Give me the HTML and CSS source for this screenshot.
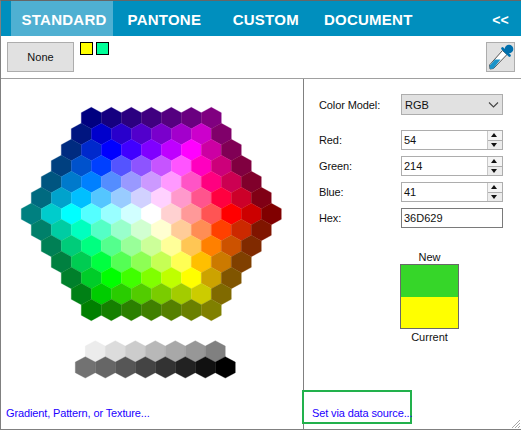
FILE: index.html
```
<!DOCTYPE html>
<html lang="en">
<head>
<meta charset="utf-8">
<title>Color picker</title>
<link rel="stylesheet" href="styles.css">
</head>
<body>
<div class="window">
  <nav class="tabs">
    <span class="tab active">STANDARD</span>
    <span class="tab pantone">PANTONE</span>
    <span class="tab custom">CUSTOM</span>
    <span class="tab document">DOCUMENT</span>
    <span class="collapse">&lt;&lt;</span>
  </nav>
  <div class="toolbar">
    <button class="btn none">None</button>
    <span class="swatch yellow"></span>
    <span class="swatch mint"></span>
    <button class="btn dropper">
      <svg width="27" height="28" viewBox="1 1 27 28">
        <path d="M4 27 L3.5 23 L16.5 8.5 L21 12.5 L7.5 26.5 Z" fill="#fff" stroke="#555" stroke-width="1"/>
        <path d="M4 27 L3.7 23.5 L9 17.5 L14.5 17.5 L7.5 26.5 Z" fill="#1a93c9"/>
        <circle cx="23" cy="7" r="4.3" fill="#0070ad"/>
        <path d="M16.5 6.5 L23.5 13.5" stroke="#0070ad" stroke-width="2.6" stroke-linecap="round"/>
      </svg>
    </button>
  </div>
  <div class="main">
    <section class="left">
      <svg id="comb" class="comb" width="302" height="311" viewBox="0 0 302 311"></svg>
      <a class="link grad">Gradient, Pattern, or Texture...</a>
    </section>
    <section class="right">
      <div class="row model">
        <label>Color Model:</label>
        <div class="select"><span>RGB</span>
          <svg width="11" height="6" viewBox="0 0 11 6"><path d="M1 .5 L5.5 5 L10 .5" fill="none" stroke="#444" stroke-width="1.1"/></svg>
        </div>
      </div>
      <div class="row"><label>Red:</label><div class="num"><span>54</span><div class="spin"><i class="up"></i><i class="down"></i></div></div></div>
      <div class="row"><label>Green:</label><div class="num"><span>214</span><div class="spin"><i class="up"></i><i class="down"></i></div></div></div>
      <div class="row"><label>Blue:</label><div class="num"><span>41</span><div class="spin"><i class="up"></i><i class="down"></i></div></div></div>
      <div class="row"><label>Hex:</label><div class="num hex"><span>36D629</span></div></div>
      <div class="preview">
        <span>New</span>
        <div class="boxes"><div class="new"></div><div class="current"></div></div>
        <span class="current-label">Current</span>
      </div>
      <div class="source"><a class="link">Set via data source...</a></div>
    </section>
  </div>
  <svg class="grip" width="10" height="10" viewBox="0 0 10 10"><path d="M9 1 L1 9 M9 4 L4 9 M9 7 L7 9" stroke="#a8a8a8" stroke-width="1"/></svg>
</div>
<script src="script.js"></script>
</body>
</html>
```
FILE: styles.css
```
* { box-sizing: border-box; }
html, body { margin: 0; padding: 0; background: #fff; }
body { font: 11px/14px "Liberation Sans", Arial, sans-serif; color: #111; }
.window { position: relative; width: 521px; height: 430px; display: flex; flex-direction: column; border-top: 1px solid #666; border-left: 1px solid #808080; border-bottom: 1px solid #808080; overflow: hidden; }
.tabs { height: 35px; flex: none; background: #008fbe; display: flex; align-items: stretch; color: #fff; font-weight: 700; font-size: 15px; letter-spacing: .25px; padding-left: 10px; }
.tab { display: flex; align-items: center; padding-top: 2px; }
.tab.active { background: #4fb0d2; width: 102px; padding-left: 10.5px; }
.pantone { margin-left: 14.5px; }
.custom { margin-left: 31.5px; }
.document { margin-left: 25px; }
.collapse { margin-left: auto; align-self: center; padding: 2px 12px 0 0; font-size: 14px; }
.toolbar { height: 43px; flex: none; display: flex; align-items: flex-start; gap: 3px; padding: 6px 6px 0; border-bottom: 1px solid #a0a0a0; }
.btn { background: #e1e1e1; border: 1px solid #adadad; height: 30px; padding: 0; font: inherit; color: #111; }
.none { width: 67px; margin-right: 3px; }
.swatch { width: 13px; height: 13px; border: 1px solid #000; }
.yellow { background: #ffff00; }
.mint { background: #00ff99; }
.dropper { width: 29px; margin-left: auto; display: flex; align-items: center; justify-content: center; }
.main { flex: 1; min-height: 0; display: flex; }
.left { width: 303px; flex: none; border-right: 1px solid #808080; display: flex; flex-direction: column; }
.comb { display: block; flex: none; }
.link { color: #2200ff; letter-spacing: -.13px; }
.grad { margin: 16px 0 0 5px; }
.right { flex: 1; position: relative; padding: 15px 0 0 15px; }
.row { display: flex; align-items: center; height: 20px; margin-bottom: 6px; }
.row label { width: 82px; flex: none; letter-spacing: -.1px; }
.row.model { height: 21px; margin-bottom: 15px; }
.select { width: 102px; height: 21px; background: #e1e1e1; border: 1px solid #adadad; display: flex; align-items: center; justify-content: space-between; padding: 0 3px 0 3px; }
.num { width: 102px; height: 20px; border: 1px solid #adadad; display: flex; align-items: center; justify-content: space-between; padding-left: 2px; background: #fff; }
.hex { border-color: #7a7a7a; }
.spin { width: 15px; height: 18px; display: flex; flex-direction: column; border-left: 1px solid #c8c8c8; }
.spin i { flex: 1; position: relative; display: block; background: #f4f4f4; }
.spin .down { border-top: 1px solid #adadad; background: #ececec; }
.up::after, .down::after { content: ""; position: absolute; left: 3px; border-left: 3.5px solid transparent; border-right: 3.5px solid transparent; }
.up::after { top: 2px; border-bottom: 4px solid #111; }
.down::after { top: 2px; border-top: 4px solid #111; }
.preview { width: 59px; margin: 22px 0 0 81px; display: flex; flex-direction: column; align-items: center; }
.preview span { height: 14px; white-space: nowrap; }
.preview .current-label { margin-top: 1px; }
.boxes { width: 59px; height: 65px; border: 1px solid #696969; display: flex; flex-direction: column; }
.new { flex: 1; background: #36d629; }
.current { flex: 1; background: #ffff00; }
.source { position: absolute; left: -2px; top: 311px; width: 110px; height: 34px; border: 2px solid #22b14c; padding: 14px 0 0 8px; white-space: nowrap; }
.grip { position: absolute; right: 0; bottom: 0; }
```
FILE: script.js
```
(function () {
  var NS = "http://www.w3.org/2000/svg";
  var svg = document.getElementById("comb");
  var W = 20, S = 5.4, H = 21.4, DY = 16;
  var OX = 20.3, OY = 28.3;
  /* ring corners, counter-clockwise from the east: red, magenta, blue, cyan, green, yellow */
  var corners = [[255,0,0],[255,0,255],[0,0,255],[0,255,255],[0,255,0],[255,255,0]];
  var lighten = [0, 0.82, 0.6, 0.33, 0];
  var darken = { 5: 0.8, 6: 0.5 };

  function css(c) {
    return "rgb(" + c.map(function (v) { return Math.round(v); }).join(",") + ")";
  }
  function add(x, y, fill) {
    var p = document.createElementNS(NS, "polygon");
    var pts = [[W/2,0],[W,S],[W,H-S],[W/2,H],[0,H-S],[0,S]];
    p.setAttribute("points", pts.map(function (q) { return (x+q[0]).toFixed(2) + "," + (y+q[1]).toFixed(2); }).join(" "));
    p.setAttribute("fill", fill);
    p.setAttribute("stroke", fill);
    p.setAttribute("stroke-width", "0.3");
    svg.appendChild(p);
  }
  /* dx is in half cell widths from the centre, dy in rows (down is positive) */
  function colorAt(dx, dy) {
    var ady = Math.abs(dy);
    var ring = Math.max(ady, (Math.abs(dx) + ady) / 2);
    if (ring === 0) return [255, 255, 255];
    var side, t;
    if (dy < 0 && ady === ring)      { side = 1; t = (ring - dx) / (2 * ring); }
    else if (dy > 0 && ady === ring) { side = 4; t = (dx + ring) / (2 * ring); }
    else if (dy <= 0 && dx > 0)      { side = 0; t = ady / ring; }
    else if (dy <= 0)                { side = 2; t = 1 - ady / ring; }
    else if (dx < 0)                 { side = 3; t = ady / ring; }
    else                             { side = 5; t = 1 - ady / ring; }
    var A = corners[side], B = corners[(side + 1) % 6];
    var c = [0, 1, 2].map(function (i) { return A[i] + (B[i] - A[i]) * t; });
    if (ring <= 4) {
      return c.map(function (v) { return v + (255 - v) * lighten[ring]; });
    }
    return c.map(function (v) { return v * darken[ring]; });
  }
  for (var row = 0; row < 13; row++) {
    var dy = row - 6;
    var n = 13 - Math.abs(dy);
    var x0 = OX + Math.abs(dy) * W / 2;
    for (var i = 0; i < n; i++) {
      add(x0 + i * W, OY + row * DY, css(colorAt(2 * i - (n - 1), dy)));
    }
  }
  var g1 = ["#ececec","#dcdcdc","#cccccc","#b8b8b8","#a8a8a8","#979797","#808080"];
  var g2 = ["#727272","#666666","#565656","#444444","#333333","#222222","#111111","#000000"];
  g1.forEach(function (c, i) { add(84.3 + i * W, 261.7, c); });
  g2.forEach(function (c, i) { add(74.3 + i * W, 277.7, c); });
})();
```
